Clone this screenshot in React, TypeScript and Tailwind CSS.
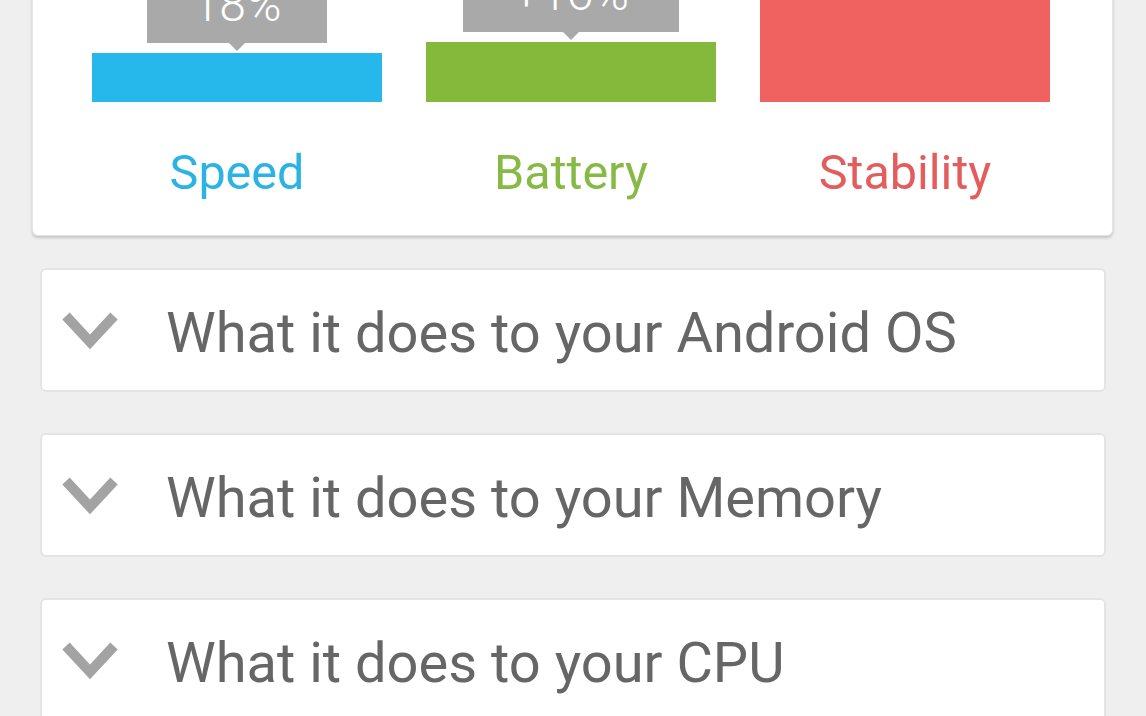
import React from "react";

const bars = [
  { label: "Speed", value: "18%", bar: "bg-[#26b8eb]", text: "text-[#2bb3e3]", h: "h-[49px]", tip: "w-[180px]" },
  { label: "Battery", value: "+16%", bar: "bg-[#84b93b]", text: "text-[#86ba45]", h: "h-[60px]", tip: "w-[216px]" },
  { label: "Stability", value: "", bar: "bg-[#ef625f]", text: "text-[#e35d5d]", h: "h-[161px]", tip: "" },
];

const sections = ["What it does to your Android OS", "What it does to your Memory", "What it does to your CPU"];

function Chevron() {
  return (
    <svg width="58" height="42" viewBox="0 0 58 42" className="shrink-0">
      <polyline points="5,7 29,33 53,7" fill="none" stroke="#a3a3a3" strokeWidth="10" />
    </svg>
  );
}

export default function App() {
  return (
    <div className="h-[716px] overflow-hidden bg-[#efefef]" style={{ fontFamily: "Roboto, 'Liberation Sans', sans-serif" }}>
      <div className="ml-[32px] mr-[33px] -mt-[60px] bg-white rounded-[6px] shadow-[0_2px_3px_rgba(0,0,0,0.18)] border border-[#e4e4e4]">
        <div className="grid grid-cols-3 gap-[44px] pl-[59px] pr-[62px]">
          {bars.map((b) => (
            <div key={b.label} className="flex flex-col items-center">
              <div className="h-[161px] w-full flex flex-col justify-end items-center">
                {b.value && (
                  <div className="flex flex-col items-center">
                    <div className={`${b.tip} h-[60px] bg-[#a9a9a9] flex items-end justify-center pb-[14px] text-white text-[48px] font-light leading-none`}>
                      {b.value}
                    </div>
                    <div className="w-0 h-0 border-l-[8px] border-r-[8px] border-t-[8px] border-l-transparent border-r-transparent border-t-[#a9a9a9] mb-[2px]" />
                  </div>
                )}
                <div className={`w-full ${b.h} ${b.bar}`} />
              </div>
              <div className={`pt-[48px] pb-[39px] text-[48.5px] leading-[46px] ${b.text}`}>{b.label}</div>
            </div>
          ))}
        </div>
      </div>
      <div className="mx-[40px] mt-[32px] flex flex-col gap-[41px]">
        {sections.map((s) => (
          <div key={s} className="h-[124px] bg-white border-2 border-[#e4e4e4] rounded-[6px] flex items-center pl-[19px]">
            <Chevron />
            <span className="ml-[47px] pt-[6px] text-[56px] text-[#666666] leading-none">{s}</span>
          </div>
        ))}
      </div>
    </div>
  );
}
